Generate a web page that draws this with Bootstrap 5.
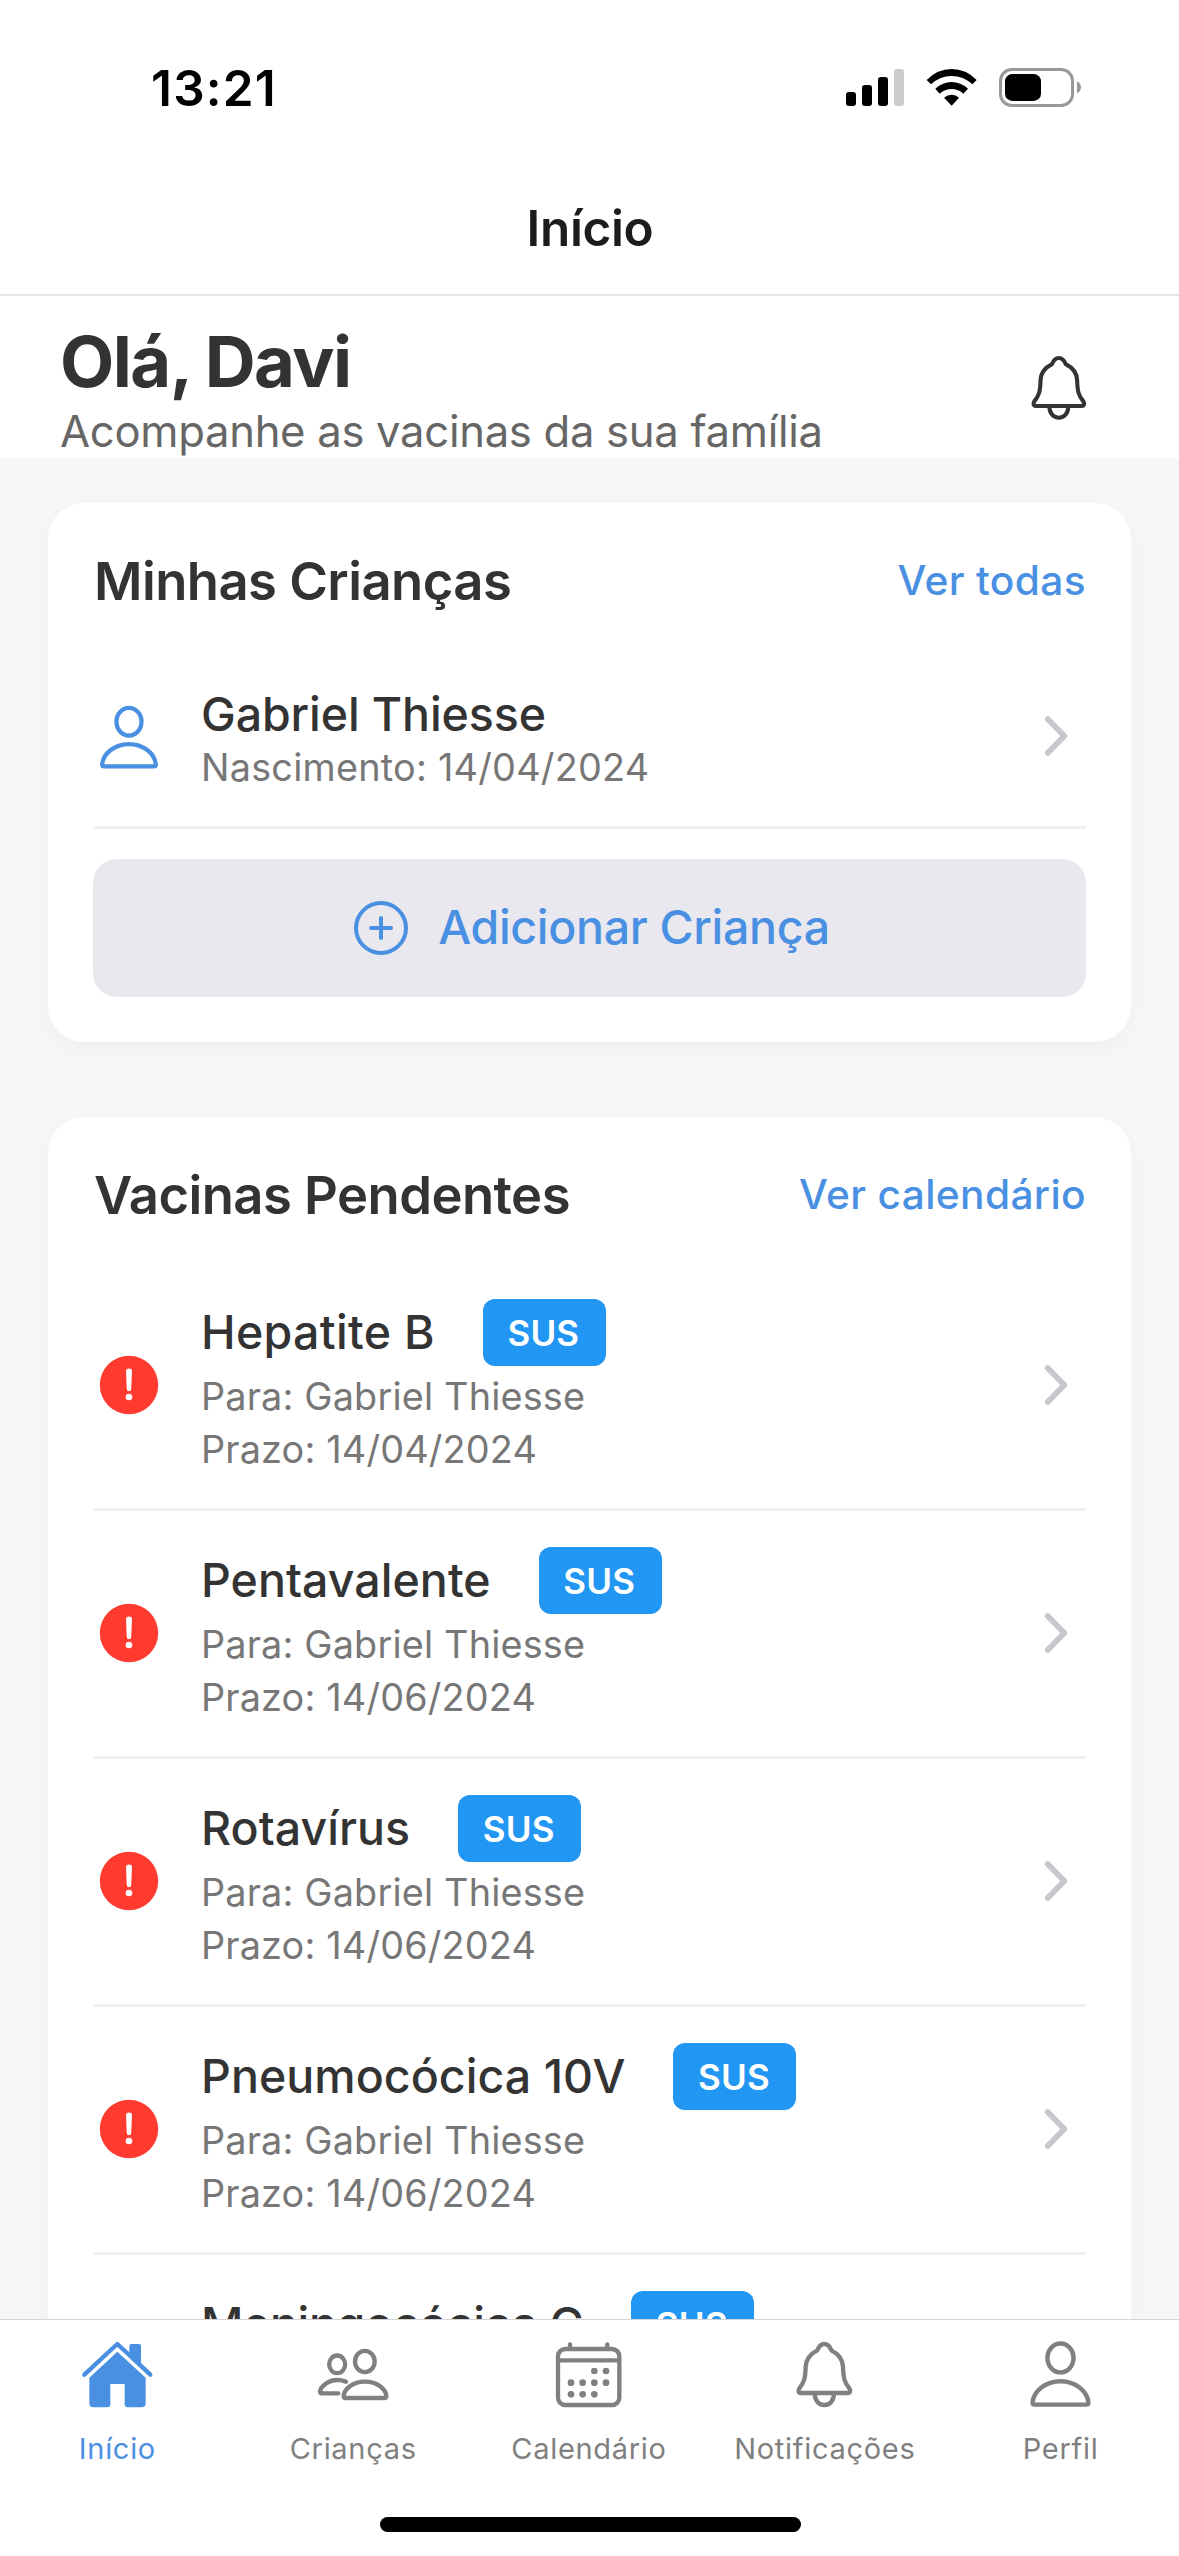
<!DOCTYPE html>
<html lang="pt-BR">
<head>
<meta charset="utf-8">
<meta name="viewport" content="width=device-width, initial-scale=1">
<title>Início</title>
<link href="https://cdn.jsdelivr.net/npm/bootstrap@5.3.0/dist/css/bootstrap.min.css" rel="stylesheet">
<style>
  body { font-family: Inter, "Liberation Sans", sans-serif; color: #333; background: #f7f7f7; }
  .screen { height: 2556px; }
  svg { display: block; flex-shrink: 0; }
  .blue { color: #4a90e2; }

  .status { height: 176px; padding: 0 79px 0 151px; color: #000; }
  .status svg { margin-top: 4px; }
  .clock { font-size: 49.5px; font-weight: 600; letter-spacing: 1.2px; line-height: 60px; }
  .titlebar { height: 120px; padding: 0 0 14px 1px; border-bottom: 2px solid #e6e6e6; }
  .titlebar h1 { font-size: 49.5px; font-weight: 600; letter-spacing: -.35px; line-height: 60px; color: #1c1c1e; }

  .greeting { height: 162px; padding: 24px 80px 0 60px; }
  .greeting h2 { font-size: 70.5px; font-weight: 700; letter-spacing: -1.55px; line-height: 84px; }
  .greeting p { font-size: 43.6px; letter-spacing: -.29px; line-height: 54px; padding-top: 1px; color: #666; }
  .greeting svg { margin-top: 34px; }

  .content { padding: 45px 48px 0; gap: 75px; min-height: 0; }
  .panel { border: 0; border-radius: 36px; padding: 45px; flex-shrink: 0; box-shadow: 0 6px 24px rgba(0,0,0,.04); }
  .panel-head { height: 65px; margin-bottom: 36px; }
  .panel-head h3 { font-size: 52.6px; font-weight: 600; letter-spacing: -.55px; line-height: 65px; padding: 1px 0 0 1px; }
  .panel-head a { font-size: 40.7px; font-weight: 500; letter-spacing: .35px; line-height: 65px; }

  .entry { padding: 36px 0; border: 0; border-bottom: 3px solid #f0f0f5; border-radius: 0; color: inherit; }
  .lead-icon { width: 72px; margin-right: 36px; }
  .entry-name { font-size: 46.5px; font-weight: 500; letter-spacing: -.1px; line-height: 58px; }
  .entry-meta { font-size: 37.8px; letter-spacing: .17px; height: 47px; line-height: 47px; padding-top: 1px; color: #777; }
  .born { letter-spacing: .24px; }
  .name-row { height: 67px; gap: 48px; }
  .tag { width: 123px; height: 67px; border-radius: 12px; background: #2196f3; font-size: 35px; font-weight: 600; letter-spacing: .2px; line-height: 68px; padding: 0 2px 0 0; }
  .dose .entry-meta { margin-top: 6px; }
  .dose > svg { margin-bottom: 2px; }
  .dose > .flex-fill { min-height: 173px; }
  .dose .entry-name { letter-spacing: .05px; margin-top: -1px; }
  .dose .wider { letter-spacing: .32px; }
  .dose .tighter { letter-spacing: -.38px; }

  .add { height: 138px; margin-top: 30px; border: 0; border-radius: 24px; background: #e9e8ef; color: #4a90e2; font-size: 46.5px; font-weight: 500; letter-spacing: -.31px; gap: 28px; padding-left: 15px; }

  .tabs { height: 237px; border-top: 1px solid #d4d4d4; padding-top: 20px; }
  .tabs a { color: #808080; font-size: 29px; letter-spacing: .7px; line-height: 36px; gap: 21px; padding-right: 1px; }
  .tabs a.blue { color: #4a90e2; }
  .home-bar { width: 421px; height: 15px; border-radius: 8px; background: #000; margin: auto auto 24px 380px; }
</style>
</head>
<body>
<svg width="0" height="0" class="position-absolute">
  <symbol id="bell" viewBox="727 45 225 210">
    <path fill="none" stroke="currentColor" stroke-linejoin="round" d="M839 57C851 57 856 65 860 76C880 86 894 99 895 125C896 160 899 171 914 190C919 198 916 204 909 204H769C762 204 759 198 764 190C779 171 782 160 783 125C784 99 798 86 818 76C822 65 827 57 839 57ZM810 205C810 229 824 240 839 240S868 229 868 205"/>
  </symbol>
  <symbol id="person" viewBox="38.2 40.6 218.7 204">
    <g fill="none" stroke="currentColor"><ellipse cx="147.5" cy="93" rx="38" ry="42"/><path d="M72 229q-6 0-6-6C69 189 105 161 147.500 161S226 189 229 223q0 6-6 6Z"/></g>
  </symbol>
  <symbol id="chevron" viewBox="0 0 60 60">
    <path fill="none" stroke="#c7c7cc" stroke-width="5.800" stroke-linecap="round" stroke-linejoin="round" d="M21.700 13L38.300 30L21.700 47"/>
  </symbol>
  <symbol id="alert" viewBox="0 0 72 72">
    <circle cx="36" cy="36" r="29.200" fill="#ff3b30"/><path fill="#fff" d="M33 22.500a3 3 0 0 1 6 0L38.200 40a2.200 2.200 0 0 1-4.400 0Z"/><circle cx="36" cy="48" r="3.300" fill="#fff"/>
  </symbol>
</svg>

<div class="screen d-flex flex-column overflow-hidden">
  <div class="status bg-white d-flex justify-content-between align-items-center flex-shrink-0">
    <span class="clock">13:21</span>
    <svg width="270" height="80" viewBox="0 0 810 240">
      <rect x="48" y="126" width="30" height="42" rx="9"/><rect x="96" y="105" width="30" height="63" rx="9"/><rect x="144" y="81" width="30" height="87" rx="9"/><rect x="192" y="57" width="30" height="111" rx="9" fill="#ccc"/>
      <path d="M290 90Q322 57 365 57T440 90L427 103Q400 78 365 78T303 103ZM316 116Q338 96 365 96T414 116L400 131Q385 117 365 117T329 131ZM342 143Q352 134 365 134T387 143L365 167Z"/>
      <rect x="511.500" y="58.500" width="216" height="108" rx="34" fill="none" stroke="#999" stroke-width="9"/><rect x="525" y="72" width="108" height="81" rx="22"/><path fill="#999" d="M741 94C757 100 757 124 741 130Z"/>
    </svg>
  </div>
  <nav class="titlebar navbar bg-white justify-content-center align-items-center flex-shrink-0"><h1 class="m-0">Início</h1></nav>

  <header class="greeting bg-white d-flex justify-content-between flex-shrink-0">
    <div><h2 class="m-0">Olá, Davi</h2><p class="m-0">Acompanhe as vacinas da sua família</p></div>
    <svg width="80" height="69" stroke-width="12.500"><use href="#bell" width="80" height="68.600"/></svg>
  </header>

  <main class="content d-flex flex-column flex-fill overflow-hidden">
    <section class="panel card">
      <div class="panel-head d-flex justify-content-between align-items-center">
        <h3 class="m-0">Minhas Crianças</h3><a class="blue text-decoration-none">Ver todas</a>
      </div>
      <div class="entry d-flex align-items-center">
        <svg class="lead-icon blue" width="72" height="68" stroke-width="13"><use href="#person" width="72" height="68"/></svg>
        <div class="flex-fill"><div class="entry-name">Gabriel Thiesse</div><div class="entry-meta born">Nascimento: 14/04/2024</div></div>
        <svg width="60" height="60" class="mb-1"><use href="#chevron"/></svg>
      </div>
      <button class="add btn w-100 d-flex justify-content-center align-items-center">
        <svg width="58" height="58" viewBox="0 0 58 58" fill="none" stroke="currentColor" stroke-width="4" stroke-linecap="round"><circle cx="29" cy="29" r="25"/><path d="M29 19V39M19 29H39"/></svg>Adicionar Criança
      </button>
    </section>

    <section class="panel card">
      <div class="panel-head d-flex justify-content-between align-items-center">
        <h3 class="m-0">Vacinas Pendentes</h3><a class="blue text-decoration-none">Ver calendário</a>
      </div>
      <div class="entry dose d-flex align-items-center">
        <svg class="lead-icon" width="72" height="72"><use href="#alert"/></svg>
        <div class="flex-fill">
          <div class="name-row d-flex align-items-center"><span class="entry-name wider">Hepatite B</span><span class="tag badge">SUS</span></div>
          <div class="entry-meta">Para: Gabriel Thiesse</div><div class="entry-meta">Prazo: 14/04/2024</div>
        </div>
        <svg width="60" height="60"><use href="#chevron"/></svg>
      </div>
      <div class="entry dose d-flex align-items-center">
        <svg class="lead-icon" width="72" height="72"><use href="#alert"/></svg>
        <div class="flex-fill">
          <div class="name-row d-flex align-items-center"><span class="entry-name">Pentavalente</span><span class="tag badge">SUS</span></div>
          <div class="entry-meta">Para: Gabriel Thiesse</div><div class="entry-meta">Prazo: 14/06/2024</div>
        </div>
        <svg width="60" height="60"><use href="#chevron"/></svg>
      </div>
      <div class="entry dose d-flex align-items-center">
        <svg class="lead-icon" width="72" height="72"><use href="#alert"/></svg>
        <div class="flex-fill">
          <div class="name-row d-flex align-items-center"><span class="entry-name">Rotavírus</span><span class="tag badge">SUS</span></div>
          <div class="entry-meta">Para: Gabriel Thiesse</div><div class="entry-meta">Prazo: 14/06/2024</div>
        </div>
        <svg width="60" height="60"><use href="#chevron"/></svg>
      </div>
      <div class="entry dose d-flex align-items-center">
        <svg class="lead-icon" width="72" height="72"><use href="#alert"/></svg>
        <div class="flex-fill">
          <div class="name-row d-flex align-items-center"><span class="entry-name">Pneumocócica 10V</span><span class="tag badge">SUS</span></div>
          <div class="entry-meta">Para: Gabriel Thiesse</div><div class="entry-meta">Prazo: 14/06/2024</div>
        </div>
        <svg width="60" height="60"><use href="#chevron"/></svg>
      </div>
      <div class="entry dose d-flex align-items-center">
        <svg class="lead-icon" width="72" height="72"><use href="#alert"/></svg>
        <div class="flex-fill">
          <div class="name-row d-flex align-items-center"><span class="entry-name tighter">Meningocócica C</span><span class="tag badge">SUS</span></div>
        </div>
        <svg width="60" height="60"><use href="#chevron"/></svg>
      </div>
    </section>
  </main>

  <footer class="tabs bg-white d-flex flex-column flex-shrink-0">
    <nav class="row g-0 row-cols-5 text-center">
      <a class="col blue d-flex flex-column align-items-center text-decoration-none">
        <svg width="75" height="70" viewBox="30 45 225 210" fill="currentColor"><path fill="none" stroke="currentColor" stroke-width="13" stroke-linecap="round" stroke-linejoin="round" d="M43 149L142 57L241 149"/><path d="M178 84V63q0-6 6-6h23q6 0 6 6V118ZM142 80L227 158V235q0 12-12 12H173q-9 0-9-9V177H121v61q0 9-9 9H70q-12 0-12-12V158Z"/></svg>
        <span>Início</span></a>
      <a class="col d-flex flex-column align-items-center text-decoration-none">
        <svg width="75" height="70" viewBox="739 45 225 210" fill="none" stroke="currentColor" stroke-width="13" stroke-linecap="round"><ellipse cx="802.500" cy="118" rx="24" ry="26.500"/><ellipse cx="885.500" cy="109.500" rx="29.500" ry="32"/><path d="M828 219q-6 0-6-6C824 193 848 170 886 170S948 193 950 213q0 6-6 6ZM806 205H757q-6 0-6-6C753 185 775 165 803 165q15 0 26 5"/></svg>
        <span>Crianças</span></a>
      <a class="col d-flex flex-column align-items-center text-decoration-none">
        <svg width="75" height="70" viewBox="21 45 225 210" fill="currentColor"><path fill="none" stroke="currentColor" stroke-width="13" stroke-linecap="round" d="M64 72H204a22 22 0 0 1 22 22V218a22 22 0 0 1-22 22H64a22 22 0 0 1-22-22V94a22 22 0 0 1 22-22ZM42 106H226M78 58V70M190 58V70"/><g><circle cx="151" cy="138" r="10"/><circle cx="186" cy="138" r="10"/><circle cx="81" cy="173" r="10"/><circle cx="116" cy="173" r="10"/><circle cx="151" cy="173" r="10"/><circle cx="186" cy="173" r="10"/><circle cx="81" cy="208" r="10"/><circle cx="116" cy="208" r="10"/><circle cx="151" cy="208" r="10"/></g></svg>
        <span>Calendário</span></a>
      <a class="col d-flex flex-column align-items-center text-decoration-none">
        <svg width="75" height="70" stroke-width="13"><use href="#bell" width="75" height="70"/></svg>
        <span>Notificações</span></a>
      <a class="col d-flex flex-column align-items-center text-decoration-none">
        <svg width="75" height="70" stroke-width="13"><use href="#person" width="75" height="70"/></svg>
        <span>Perfil</span></a>
    </nav>
    <div class="home-bar"></div>
  </footer>
</div>
<script src="https://cdn.jsdelivr.net/npm/bootstrap@5.3.0/dist/js/bootstrap.bundle.min.js"></script>
</body>
</html>
